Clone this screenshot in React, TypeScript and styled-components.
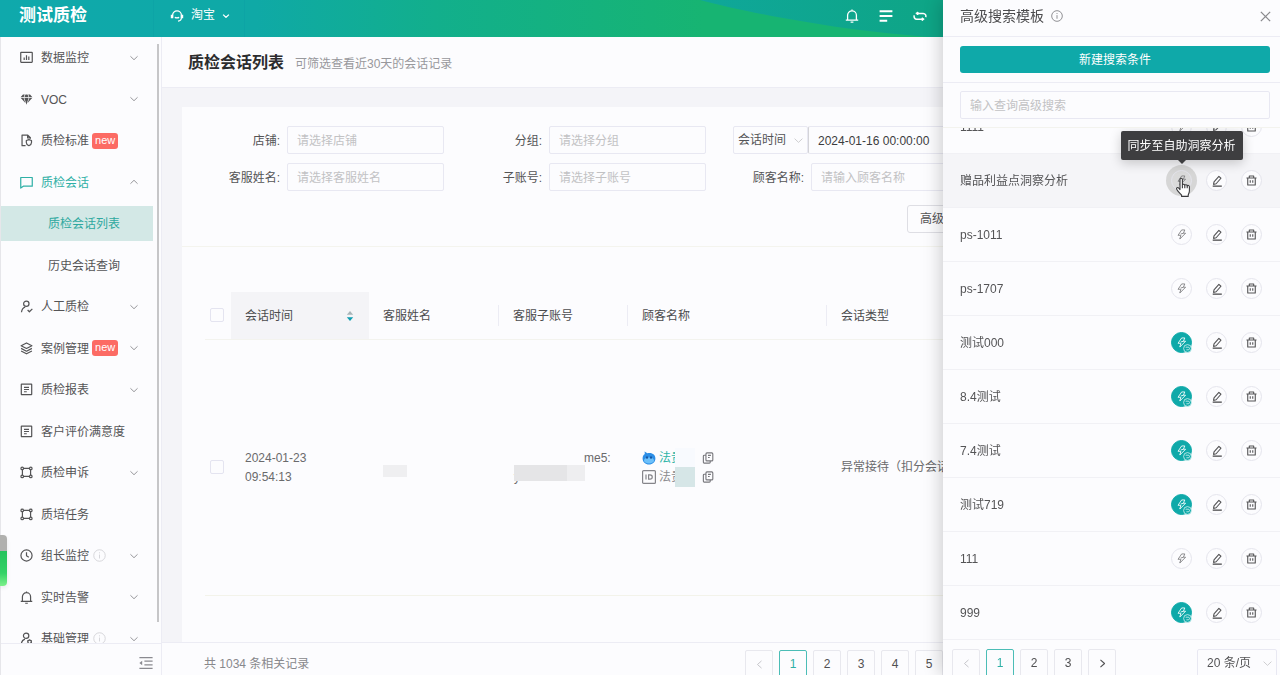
import React from "react";
import styled, { createGlobalStyle, css } from "styled-components";

const c = {
  teal: "#0fa9a9",
  surface: "#fcfcfe",
  canvas: "#f4f4f8",
  line: "#ececf4",
  text: "#545456",
  dark: "#2c2c2e",
  muted: "#98989c",
  faint: "#c2c2c4",
};

const GlobalStyle = createGlobalStyle`
  * { box-sizing: border-box; }
  html, body, #root { height: 100%; margin: 0; }
  body {
    font-family: "Liberation Sans", "Noto Sans CJK SC", sans-serif;
    font-size: 12px;
    line-height: 19px;
    color: ${c.text};
    background: ${c.surface};
    overflow: hidden;
  }
  button, input, select { font: inherit; color: inherit; margin: 0; }
  button { cursor: pointer; }
  ul, ol { list-style: none; margin: 0; padding: 0; }
  h1, h2, p { margin: 0; }
  svg { display: block; flex: none; }
`;

/* ---------- icons ---------- */

const paths: Record<string, React.ReactNode> = {
  chart: (
    <>
      <rect x="0.8" y="1.4" width="12.4" height="10.8" rx="0.5" />
      <path d="M4.5 9.8V7M7 9.8V4.500M9.500 9.800V6" />
    </>
  ),
  gem: (
    <path
      stroke="none"
      fill="currentColor"
      d="M3.2 1.500h1.900L3.900 4.600H.6zM5.900 1.500h2.200l1.200 3.100H4.700zM8.900 1.500h1.900l2.600 3.100h-3.300zM.9 5.300h3l1.900 5.600zM4.700 5.300h4.600L7 12.600zM10.100 5.300h3l-4.900 5.600z"
    />
  ),
  doc: (
    <>
      <path d="M6 12.6H2.2V1.2h6.2l2.8 2.8v1M8.2 1.4v2.8h2.8" />
      <path d="M6.8 7l2.8-1 2.8 1v2.200c0 1.800-1.200 2.800-2.800 3.400-1.600-.6-2.800-1.600-2.800-3.400z" />
    </>
  ),
  chat: <path d="M.8 1.600h12.400v9.400H3.600L.8 13z" />,
  userCheck: (
    <>
      <circle cx="6.8" cy="4" r="2.9" />
      <path d="M1.6 13.2c.3-3 2-5 4-5.600M8.200 10.800l1.900 1.900 3.200-3.200" />
    </>
  ),
  layers: (
    <path d="M7 1l5.800 3L7 7 1.200 4zM1.200 6.900L7 9.900l5.800-3M1.200 9.700l5.800 3 5.800-3" />
  ),
  report: (
    <>
      <rect x="1.4" y="1.2" width="11.2" height="11.4" rx="0.4" />
      <path d="M4.300 4.600h5.400M4.300 7h5.400M4.300 9.400h3" />
    </>
  ),
  nodes: (
    <>
      <path d="M4 2.600h6M4 11.200h6M2.600 4v6M11.400 4v6" />
      <circle cx="2.4" cy="2.6" r="1.4" />
      <circle cx="11.6" cy="2.6" r="1.4" />
      <circle cx="2.4" cy="11.2" r="1.4" />
      <circle cx="11.6" cy="11.2" r="1.4" />
    </>
  ),
  clock: (
    <>
      <circle cx="7" cy="7" r="6" />
      <path d="M7 3.400v3.800l2.500 1.600" />
    </>
  ),
  bell: (
    <path d="M.8 11.200h12.400M2.600 11V6.200a4.400 4.400 0 018.800 0V11M5.600 13.200h2.800M7 2V.6" />
  ),
  userGear: (
    <>
      <circle cx="6.6" cy="4" r="2.9" />
      <path d="M1.400 13.200c.2-3 1.900-5 4-5.600" />
      <circle cx="10.3" cy="10.6" r="1.9" />
      <path d="M10.300 8v1M10.300 12.200v1M8 9.300l.9.5M11.700 11.400l.9.5M12.600 9.300l-.9.5" />
    </>
  ),
  info: (
    <>
      <circle cx="7" cy="7" r="6.2" />
      <path d="M7 6v4.200M7 3.600v1.100" />
    </>
  ),
  down: <path d="M2 4.600L7 9.400l5-4.800" />,
  up: <path d="M2 9.400L7 4.600l5 4.800" />,
  left: <path d="M9.600 2.400L4.400 7l5.200 4.600" />,
  right: <path d="M4.400 2.400L9.600 7l-5.200 4.600" />,
  close: <path d="M2 2l10 10M12 2L2 12" />,
  headset: (
    <>
      <path d="M2.600 8.600V6.200a4.400 4.400 0 018.800 0v2.600c0 2-1.400 3.200-3.400 3.400" />
      <path d="M2 5.800v3.400M12 5.800v3.400" strokeWidth="2.400" />
      <path d="M4.800 8.400c1.400.6 3 .6 4.400 0" />
    </>
  ),
  lines: (
    <path d="M.6 2.200h12.800M.6 7h12.800M.6 11.800h7.600" strokeWidth="2" />
  ),
  loop: (
    <>
      <path d="M4 4.400h6.200a2.600 2.600 0 012.400 3.800M10 10.200H3.800a2.600 2.600 0 01-2.400-3.800" />
      <path d="M5 3L2.800 4.400 5 5.800zM9 8.800l2.200 1.400L9 11.600z" fill="currentColor" strokeWidth="1" />
    </>
  ),
  fold: (
    <>
      <path d="M.4 1.600h13.200M5.400 5.200h8.200M5.400 8.800h8.200M.4 12.400h13.200" />
      <path d="M3.200 4.800L.4 7l2.800 2.200z" fill="currentColor" stroke="none" />
    </>
  ),
  bolt: <path d="M7.200 1.200h4L9.400 5.400h2.800L4.800 12.800l1.400-4.800H2.600zM9.400 5.400L6 6.400" />,
  pen: (
    <>
      <path d="M9.200 1.600l2.400 2.200-5.600 6.400-3 .8.5-3z" />
      <path d="M2 13h10.600" strokeWidth="1.600" />
    </>
  ),
  trash: (
    <>
      <path d="M.6 3.800h12.800M4.200 3.600V1.200h5.600v2.400M2.200 4v8.800h9.600V4" />
      <path d="M5.400 6.800v3M8.600 6.800v3" />
    </>
  ),
  copy: (
    <>
      <rect x="4.600" y="1" width="8" height="9.400" rx="1.200" />
      <path d="M4.600 3.800H2.600a1 1 0 00-1 1V12a1 1 0 001 1h6a1 1 0 001-1v-1.400M7 4h3.400M7 6.400h2" />
    </>
  ),
};

function Icon({ name, size = 14, weight = 1.2 }: { name: string; size?: number; weight?: number }) {
  return (
    <svg width={size} height={size} viewBox="0 0 14 14" fill="none" stroke="currentColor" strokeWidth={weight} strokeLinejoin="round" aria-hidden="true">
      {paths[name]}
    </svg>
  );
}

/* ---------- shell ---------- */

const Page = styled.div`
  height: 100vh;
  display: flex;
  flex-direction: column;
  overflow: hidden;
`;

const TopBar = styled.header`
  position: relative;
  flex: none;
  height: 37px;
  padding: 0 353px 6px 19px;
  display: flex;
  align-items: center;
  color: #fff;
  background: linear-gradient(90deg, #0fa9ac 0, #0fa9a6 20%, #12af8c 34%, #17b472 55%, #17b472 100%);
`;

const Wave = styled.svg`
  position: absolute;
  inset: 0;
  width: 100%;
  height: 100%;
`;

const Brand = styled.h1`
  width: 151px;
  font-size: 17px;
  line-height: 28px;
  font-weight: 700;
`;

const ShopSwitch = styled.button`
  position: relative;
  display: flex;
  align-items: center;
  gap: 7px;
  padding: 0;
  border: 0;
  background: none;
`;

const TopActions = styled.div`
  position: relative;
  display: flex;
  gap: 20px;
  margin-left: auto;
`;

const PlainButton = styled.button`
  display: flex;
  padding: 0;
  border: 0;
  background: none;
`;

const Body = styled.div`
  flex: 1;
  min-height: 0;
  display: flex;
`;

/* ---------- side menu ---------- */

const Sidebar = styled.nav`
  position: relative;
  flex: none;
  width: 162px;
  display: flex;
  flex-direction: column;
  border-left: 1px solid #e6e6ea;
  border-right: 1px solid ${c.line};
`;

const MenuScroll = styled.ul`
  flex: 1;
  min-height: 0;
  overflow: hidden;
`;

const MenuItem = styled.li`
  height: 41px;
  display: flex;
  align-items: center;
  &:nth-child(even) { height: 42px; }
`;

const MenuLink = styled.a<{ $active?: boolean }>`
  flex: 1;
  display: flex;
  align-items: center;
  padding: 0 22px 0 19px;
  color: ${(p) => (p.$active ? "#2fb0a6" : c.text)};
  text-decoration: none;
`;

const MenuText = styled.span`
  margin-left: 8px;
  padding-top: 2px;
`;

const MenuChevron = styled.span`
  margin-left: auto;
  color: #98989c;
`;

const SubLink = styled.a<{ $active?: boolean }>`
  flex: 1;
  height: 35px;
  margin-right: 8px;
  padding-left: 47px;
  line-height: 37px;
  text-decoration: none;
  color: ${(p) => (p.$active ? "#2fa8a0" : c.text)};
  background: ${(p) => (p.$active ? "#d3e8e6" : "none")};
`;

const NewTag = styled.span`
  margin-left: 3px;
  padding: 0 3px;
  height: 16px;
  line-height: 15px;
  border-radius: 3px;
  font-size: 11px;
  background: #fc6b64;
  color: #fff;
`;

const InfoMark = styled.span`
  margin-left: 4px;
  color: #d4d4d8;
`;

const ScrollThumb = styled.div`
  position: absolute;
  top: 7px;
  bottom: 53px;
  right: 2px;
  width: 2px;
  background: #c6c6c8;
`;

const SideFooter = styled.div`
  flex: none;
  height: 32px;
  padding: 7px 8px 0 0;
  display: flex;
  justify-content: flex-end;
  align-items: center;
  border-top: 1px solid ${c.line};
  color: #8a8a90;
`;

const EdgeHandle = styled.div`
  position: fixed;
  left: 0;
  bottom: 89px;
  width: 7px;
  height: 51px;
  border-radius: 0 4px 4px 0;
  background: linear-gradient(#b0b0ae 0 16px, #24c25c 16px, #34d266 38px, #7cf08a);
  box-shadow: 0 2px 4px rgba(0, 0, 0, 0.08);
`;

/* ---------- main column ---------- */

const Main = styled.main`
  flex: 1;
  min-width: 0;
  display: flex;
  flex-direction: column;
  background: ${c.canvas};
`;

const PageHead = styled.div`
  flex: none;
  height: 51px;
  padding: 2px 0 0 26px;
  display: flex;
  align-items: center;
  gap: 11px;
  background: ${c.surface};
  border-bottom: 1px solid ${c.line};
`;

const PageTitle = styled.h2`
  font-size: 16px;
  line-height: 24px;
  color: ${c.dark};
`;

const Hint = styled.p`
  padding-top: 2px;
  color: ${c.muted};
`;

const Card = styled.section`
  flex: 1;
  min-height: 0;
  margin: 19px 20px 0;
  overflow: hidden;
  background: ${c.surface};
`;

const Filters = styled.form`
  display: grid;
  grid-template-columns: repeat(4, minmax(0, 1fr));
  row-gap: 9px;
  padding: 19px 30px 13px 0;
`;

const Field = styled.div`
  display: flex;
  align-items: center;
`;

const FieldLabel = styled.label`
  width: 105px;
  padding: 2px 7px 0 0;
  text-align: right;
`;

const box = css`
  height: 28px;
  border: 1px solid #e8e8f2;
  border-radius: 2px;
  background: ${c.surface};
`;

const TextInput = styled.input`
  ${box}
  flex: 1;
  min-width: 0;
  padding: 2px 9px 0;
  outline: 0;
  &::placeholder { color: ${c.faint}; opacity: 1; }
`;

const DateInput = styled(TextInput)`
  color: #3c3c3e;
  border-left-color: #d4d4d8;
`;

const TimeGroup = styled(Field)`
  grid-column: 3 / 5;
  padding-left: 27px;
`;

const SelectWrap = styled.span<{ $width: number }>`
  position: relative;
  width: ${(p) => p.$width}px;
  color: ${c.faint};
`;

const Select = styled.select`
  ${box}
  display: block;
  width: 100%;
  padding: 1px 4px 0;
  appearance: none;
  color: ${c.text};
  outline: 0;
`;

const PageSizeSelect = styled(Select)`
  padding: 0 9px;
`;

const SelectArrow = styled.span`
  position: absolute;
  right: 4px;
  top: 9px;
  pointer-events: none;
`;

const FormActions = styled.div`
  grid-column: 1 / -1;
  display: flex;
  justify-content: flex-end;
  padding: 5px 249px 0 0;
`;

const OutlineButton = styled.button`
  ${box}
  padding: 1px 12px 0;
  border-color: #dedee4;
  border-radius: 3px;
`;

const TableWrap = styled.div`
  padding: 45px 23px 0;
  border-top: 1px solid #f4f4ee;
`;

const Table = styled.table`
  width: 100%;
  table-layout: fixed;
  border-collapse: collapse;
`;

const Th = styled.th<{ $sorted?: boolean }>`
  height: 47px;
  padding: 0;
  text-align: left;
  font-weight: 400;
  color: #4c4c4e;
  border-bottom: 1px solid #f3f3ee;
  background: ${(p) => (p.$sorted ? "#f4f4f7" : "none")};
`;

const ThInner = styled.div<{ $divider?: boolean }>`
  display: flex;
  justify-content: space-between;
  align-items: center;
  padding: 2px 14px 0;
  border-right: 1px solid ${(p) => (p.$divider ? c.line : "transparent")};
`;

const Td = styled.td`
  position: relative;
  height: 256px;
  padding: 1px 14px 0;
  color: #6a6a6c;
  border-bottom: 1px solid #f3f3ea;
`;

const CheckTd = styled(Td)`
  padding: 0 5px;
`;

const Check = styled.input`
  display: block;
  appearance: none;
  width: 14px;
  height: 14px;
  border: 1px solid #e4e4f0;
  border-radius: 2px;
`;

const CheckHead = styled.div`
  padding-left: 5px;
`;

const NoWrap = styled.div`
  white-space: nowrap;
  overflow: hidden;
`;

const Mask = styled.span<{ $w: number; $h: number; $tone: string }>`
  display: block;
  width: ${(p) => p.$w}px;
  height: ${(p) => p.$h}px;
  background: ${(p) => p.$tone};
`;

const NameMask = styled.div`
  padding-top: 6px;
`;

const Account = styled.div`
  position: relative;
`;

const AccountLine = styled.div<{ $indent?: boolean }>`
  padding-left: ${(p) => (p.$indent ? 71 : 1)}px;
`;

const AccountMask = styled.div`
  position: absolute;
  top: 16px;
  left: 1px;
  display: flex;
`;

const CustomerLine = styled.div<{ $link?: boolean }>`
  position: relative;
  display: flex;
  align-items: center;
  gap: 3px;
  height: 19px;
  color: ${(p) => (p.$link ? "#2fb5a8" : "#8c8c90")};
`;

const CustomerName = styled.span`
  position: relative;
  width: 40px;
`;

const NameCover = styled.span<{ $tone: string }>`
  position: absolute;
  left: 16px;
  top: -1px;
  width: 20px;
  height: 20px;
  background: ${(p) => p.$tone};
`;

const CopyButton = styled(PlainButton)`
  color: #77777c;
`;

const MainFooter = styled.footer`
  flex: none;
  height: 33px;
  padding: 7px 337px 0 42px;
  display: flex;
  align-items: flex-start;
  justify-content: space-between;
  overflow: hidden;
  background: ${c.surface};
  border-top: 1px solid ${c.line};
`;

const Total = styled.p`
  padding-top: 5px;
  color: #88888c;
`;

const Pager = styled.div`
  display: flex;
  gap: 6px;
`;

const PageButton = styled.button<{ $current?: boolean; $dim?: boolean }>`
  width: 28px;
  height: 28px;
  padding: 0;
  display: flex;
  align-items: center;
  justify-content: center;
  border: 1px solid ${(p) => (p.$current ? "#4bbdb6" : "#e8e8ee")};
  border-radius: 2px;
  background: ${c.surface};
  color: ${(p) => (p.$current ? "#2fb0a6" : p.$dim ? "#c2c2c8" : "#505052")};
`;

/* ---------- drawer ---------- */

const Drawer = styled.aside`
  position: fixed;
  top: 0;
  right: 0;
  bottom: 0;
  width: 337px;
  display: flex;
  flex-direction: column;
  background: ${c.surface};
  box-shadow: -3px 0 16px rgba(0, 0, 0, 0.18);
`;

const DrawerHead = styled.div`
  flex: none;
  height: 37px;
  padding: 0 8px 4px 17px;
  display: flex;
  align-items: center;
  border-bottom: 1px solid ${c.line};
  color: #8a8a8e;
`;

const DrawerTitle = styled.h2`
  margin-right: 7px;
  font-size: 14px;
  font-weight: 400;
  color: #4c4c4e;
`;

const CloseButton = styled(PlainButton)`
  margin-left: auto;
`;

const DrawerBlock = styled.div`
  flex: none;
  display: flex;
  padding: 8px 10px 8px 17px;
`;

const CreateBlock = styled(DrawerBlock)`
  padding-top: 9px;
  padding-bottom: 9px;
  border-bottom: 1px solid ${c.line};
`;

const PrimaryButton = styled.button`
  flex: 1;
  height: 27px;
  padding: 2px 0 0;
  border: 0;
  border-radius: 3px;
  background: ${c.teal};
  color: #fff;
`;

const TemplateViewport = styled.div`
  flex: 1;
  min-height: 0;
  display: flex;
  flex-direction: column;
  overflow: hidden;
  border-top: 1px solid #f3f3ee;
`;

const TemplateList = styled.ul`
  margin-top: -28px;
`;

const TemplateRow = styled.li<{ $hover?: boolean }>`
  height: 54px;
  padding: 0 18px 0 17px;
  display: flex;
  align-items: center;
  justify-content: space-between;
  border-bottom: 1px solid #f1f1f5;
  background: ${(p) => (p.$hover ? "#f5f5f8" : "none")};
`;

const TemplateName = styled.span`
  padding-top: 1px;
`;

const RowActions = styled.div`
  display: flex;
  gap: 14px;
`;

const RoundButton = styled.button<{ $on?: boolean; $pressed?: boolean; $soft?: boolean }>`
  position: relative;
  width: 21px;
  height: 21px;
  padding: 0;
  display: flex;
  align-items: center;
  justify-content: center;
  border: 1px solid ${(p) => (p.$on ? c.teal : "#e4e4ec")};
  border-radius: 50%;
  color: ${(p) => (p.$on ? "#fff" : p.$soft ? "#7c7c7e" : "#545456")};
  background: ${(p) => (p.$on ? c.teal : p.$pressed ? "#dadada" : c.surface)};
  box-shadow: ${(p) => (p.$pressed ? "0 0 0 5px #d6d6d6" : "none")};
`;

const SyncBadge = styled.svg`
  position: absolute;
  right: -1px;
  bottom: -1px;
`;

const Tooltip = styled.span`
  position: absolute;
  z-index: 2;
  left: 50%;
  bottom: 30px;
  transform: translateX(-50%);
  padding: 0 7px;
  height: 29px;
  line-height: 30px;
  white-space: nowrap;
  border-radius: 2px;
  background: #3e3e40;
  color: #fff;
  box-shadow: 0 3px 12px rgba(0, 0, 0, 0.2);
  &::after {
    content: "";
    position: absolute;
    left: 50%;
    top: 100%;
    margin-left: -4px;
    border: 4px solid transparent;
    border-top-color: #3e3e40;
  }
`;

const HandCursor = styled.svg`
  position: absolute;
  left: 3px;
  top: 6px;
`;

const DrawerFooter = styled.div`
  flex: none;
  height: 34px;
  padding: 8px 3px 0 9px;
  display: flex;
  align-items: flex-start;
  justify-content: space-between;
  overflow: hidden;
`;

/* ---------- data ---------- */

type Entry = { label: string; icon?: string; tag?: boolean; info?: boolean; arrow?: "down" | "up"; active?: boolean; sub?: boolean };

const menu: Entry[] = [
  { label: "数据监控", icon: "chart", arrow: "down" },
  { label: "VOC", icon: "gem", arrow: "down" },
  { label: "质检标准", icon: "doc", tag: true },
  { label: "质检会话", icon: "chat", arrow: "up", active: true },
  { label: "质检会话列表", sub: true, active: true },
  { label: "历史会话查询", sub: true },
  { label: "人工质检", icon: "userCheck", arrow: "down" },
  { label: "案例管理", icon: "layers", tag: true, arrow: "down" },
  { label: "质检报表", icon: "report", arrow: "down" },
  { label: "客户评价满意度", icon: "report" },
  { label: "质检申诉", icon: "nodes", arrow: "down" },
  { label: "质培任务", icon: "nodes" },
  { label: "组长监控", icon: "clock", info: true, arrow: "down" },
  { label: "实时告警", icon: "bell", arrow: "down" },
  { label: "基础管理", icon: "userGear", info: true, arrow: "down" },
];

const templates = [
  { name: "1111", on: false },
  { name: "赠品利益点洞察分析", on: false, hover: true },
  { name: "ps-1011", on: false },
  { name: "ps-1707", on: false },
  { name: "测试000", on: true },
  { name: "8.4测试", on: true },
  { name: "7.4测试", on: true },
  { name: "测试719", on: true },
  { name: "111", on: false },
  { name: "999", on: true },
];

/* ---------- parts ---------- */

function FilterInput({ id, label, placeholder }: { id: string; label: string; placeholder: string }) {
  return (
    <Field>
      <FieldLabel htmlFor={id}>{label}:</FieldLabel>
      <TextInput id={id} placeholder={placeholder} />
    </Field>
  );
}

function Pagination({ pages, next }: { pages: number; next?: boolean }) {
  return (
    <Pager>
      <PageButton $dim aria-label="上一页"><Icon name="left" size={11} /></PageButton>
      {Array.from({ length: pages }, (_, i) => (
        <PageButton key={i} $current={i === 0}>{i + 1}</PageButton>
      ))}
      {next && <PageButton aria-label="下一页"><Icon name="right" size={11} weight={1.4} /></PageButton>}
    </Pager>
  );
}

function Template({ name, on, hover }: { name: string; on: boolean; hover?: boolean }) {
  return (
    <TemplateRow $hover={hover}>
      <TemplateName>{name}</TemplateName>
      <RowActions>
        <RoundButton $on={on} $pressed={hover} $soft aria-label="同步">
          <Icon name="bolt" size={11} weight={1.1} />
          {on && (
            <SyncBadge width="9" height="9" viewBox="0 0 9 9" fill={c.teal} stroke="#d8f4f2" strokeWidth="0.8">
              <circle cx="4.5" cy="4.5" r="3.9" />
              <path d="M2.6 3.2h2.6a1.2 1.2 0 010 2.6H3.4" />
            </SyncBadge>
          )}
          {hover && (
            <>
              <Tooltip role="tooltip">同步至自助洞察分析</Tooltip>
              <HandCursor width="18" height="21" viewBox="0 0 18 21" fill="#fff" stroke="#3a3a3c" strokeWidth="1.1" strokeLinejoin="round">
                <path d="M5 12.6V2.6c0-1.8 2.4-1.8 2.4 0v5.6c.3-1.3 2.3-1.1 2.4.2.4-1 2.2-.8 2.4.5.5-.9 2.2-.5 2.2.8v4.1c0 2-.9 2.8-1.2 4.4v1.2H6.6v-1.2C5.4 16.8 3 14.6 1.8 12.4c-.9-1.6.9-2.6 2-1.2z" />
                <path d="M7.4 8.2v3M9.8 8.4v2.8M12.2 9v2.2" fill="none" />
              </HandCursor>
            </>
          )}
        </RoundButton>
        <RoundButton aria-label="编辑"><Icon name="pen" size={12} weight={1.3} /></RoundButton>
        <RoundButton aria-label="删除"><Icon name="trash" size={11} weight={1.4} /></RoundButton>
      </RowActions>
    </TemplateRow>
  );
}

export default function App() {
  return (
    <Page>
      <GlobalStyle />
      <TopBar>
        <Wave viewBox="0 0 1280 37" preserveAspectRatio="none" aria-hidden="true">
          <defs>
            <linearGradient id="wave" x1="0" x2="1">
              <stop offset="0" stopColor="#0fa79a" />
              <stop offset="0.4" stopColor="#0ea586" />
              <stop offset="1" stopColor="#0ea586" />
            </linearGradient>
          </defs>
          <path d="M700 0C752 14 850 32 930 37H1280V0z" fill="url(#wave)" />
          <path d="M244.5 0V37M153.5 0V37" stroke="#0c9ba4" strokeOpacity="0.35" />
        </Wave>
        <Brand>测试质检</Brand>
        <ShopSwitch>
          <Icon name="headset" />
          <span>淘宝</span>
          <Icon name="down" size={8} weight={2.4} />
        </ShopSwitch>
        <TopActions>
          <PlainButton aria-label="通知"><Icon name="bell" weight={1.3} /></PlainButton>
          <PlainButton aria-label="列表"><Icon name="lines" /></PlainButton>
          <PlainButton aria-label="切换"><Icon name="loop" weight={1.5} /></PlainButton>
        </TopActions>
      </TopBar>

      <Body>
        <Sidebar>
          <MenuScroll>
            {menu.map((m) => (
              <MenuItem key={m.label}>
                {m.sub ? (
                  <SubLink href="#" $active={m.active}>{m.label}</SubLink>
                ) : (
                  <MenuLink href="#" $active={m.active}>
                    <Icon name={m.icon!} size={13} weight={1.3} />
                    <MenuText>{m.label}</MenuText>
                    {m.tag && <NewTag>new</NewTag>}
                    {m.info && <InfoMark><Icon name="info" size={13} weight={1} /></InfoMark>}
                    {m.arrow && <MenuChevron><Icon name={m.arrow} size={10} weight={1.4} /></MenuChevron>}
                  </MenuLink>
                )}
              </MenuItem>
            ))}
          </MenuScroll>
          <ScrollThumb />
          <SideFooter>
            <PlainButton aria-label="收起菜单"><Icon name="fold" weight={1.3} /></PlainButton>
          </SideFooter>
        </Sidebar>

        <Main>
          <PageHead>
            <PageTitle>质检会话列表</PageTitle>
            <Hint>可筛选查看近30天的会话记录</Hint>
          </PageHead>

          <Card>
            <Filters onSubmit={(e) => e.preventDefault()}>
              <FilterInput id="shop" label="店铺" placeholder="请选择店铺" />
              <FilterInput id="group" label="分组" placeholder="请选择分组" />
              <TimeGroup>
                <SelectWrap $width={75}>
                  <Select aria-label="时间类型"><option>会话时间</option></Select>
                  <SelectArrow><Icon name="down" size={11} weight={1} /></SelectArrow>
                </SelectWrap>
                <DateInput aria-label="开始时间" defaultValue="2024-01-16 00:00:00" />
              </TimeGroup>
              <FilterInput id="agent" label="客服姓名" placeholder="请选择客服姓名" />
              <FilterInput id="account" label="子账号" placeholder="请选择子账号" />
              <FilterInput id="customer" label="顾客名称" placeholder="请输入顾客名称" />
              <FormActions>
                <OutlineButton type="button">高级搜索</OutlineButton>
              </FormActions>
            </Filters>

            <TableWrap>
              <Table>
                <colgroup>
                  <col width="26" />
                  <col width="138" />
                  <col width="130" />
                  <col width="129" />
                  <col width="199" />
                  <col />
                </colgroup>
                <thead>
                  <tr>
                    <Th><CheckHead><Check type="checkbox" aria-label="全选" /></CheckHead></Th>
                    <Th $sorted>
                      <ThInner>
                        会话时间
                        <svg width="8" height="12" viewBox="0 0 8 12" aria-hidden="true">
                          <path d="M4 1l3.2 3.8H.8z" fill="#a8b4b8" />
                          <path d="M4 11L.8 7.2h6.4z" fill="#0f9db0" />
                        </svg>
                      </ThInner>
                    </Th>
                    <Th><ThInner $divider>客服姓名</ThInner></Th>
                    <Th><ThInner $divider>客服子账号</ThInner></Th>
                    <Th><ThInner $divider>顾客名称</ThInner></Th>
                    <Th><ThInner>会话类型</ThInner></Th>
                  </tr>
                </thead>
                <tbody>
                  <tr>
                    <CheckTd><Check type="checkbox" aria-label="选择会话" /></CheckTd>
                    <Td>2024-01-23<br />09:54:13</Td>
                    <Td><NameMask><Mask $w={24} $h={12} $tone="#efeff1" /></NameMask></Td>
                    <Td>
                      <Account>
                        <AccountLine $indent>me5:</AccountLine>
                        <AccountLine>yuanxin</AccountLine>
                        <AccountMask>
                          <Mask $w={53} $h={16} $tone="#e5e5e7" />
                          <Mask $w={18} $h={16} $tone="#eeeef0" />
                        </AccountMask>
                      </Account>
                    </Td>
                    <Td>
                      <CustomerLine $link>
                        <svg width="14" height="14" viewBox="0 0 14 14" aria-hidden="true">
                          <path d="M2.6.6l2.8 1.6C10 1 13.4 3.600 13.400 7.400c0 3.600-2.800 6-6.400 6S.6 11 .6 7.400c0-2 .8-3.400 2.200-4.400z" fill="#2c8ee6" />
                          <ellipse cx="7" cy="9.400" rx="5" ry="3" fill="#6cc0fa" />
                          <ellipse cx="5" cy="6.600" rx="0.900" ry="1.300" fill="#14509c" />
                          <ellipse cx="9" cy="6.600" rx="0.900" ry="1.300" fill="#14509c" />
                        </svg>
                        <CustomerName>法贵<NameCover $tone="#f8fafe" /></CustomerName>
                        <CopyButton aria-label="复制名称"><Icon name="copy" size={12} weight={1.3} /></CopyButton>
                      </CustomerLine>
                      <CustomerLine>
                        <svg width="14" height="14" viewBox="0 0 14 14" fill="none" stroke="#85858a" strokeWidth="1.2" aria-hidden="true">
                          <rect x="0.6" y="0.6" width="12.8" height="12.8" rx="1" />
                          <path d="M4 4.400v5.200M6.600 4.800h1.400c3 0 3 4.400 0 4.400H6.600z" />
                        </svg>
                        <CustomerName>法贵<NameCover $tone="#d6e6e7" /></CustomerName>
                        <CopyButton aria-label="复制编号"><Icon name="copy" size={12} weight={1.3} /></CopyButton>
                      </CustomerLine>
                    </Td>
                    <Td><NoWrap>异常接待（扣分会话）</NoWrap></Td>
                  </tr>
                </tbody>
              </Table>
            </TableWrap>
          </Card>

          <MainFooter>
            <Total>共 1034 条相关记录</Total>
            <Pagination pages={5} />
          </MainFooter>
        </Main>
      </Body>

      <EdgeHandle />

      <Drawer>
        <DrawerHead>
          <DrawerTitle>高级搜索模板</DrawerTitle>
          <Icon name="info" size={12} weight={1.1} />
          <CloseButton aria-label="关闭"><Icon name="close" size={13} weight={1.4} /></CloseButton>
        </DrawerHead>
        <CreateBlock><PrimaryButton>新建搜索条件</PrimaryButton></CreateBlock>
        <DrawerBlock><TextInput aria-label="查询高级搜索" placeholder="输入查询高级搜索" /></DrawerBlock>
        <TemplateViewport>
          <TemplateList>
            {templates.map((t) => <Template key={t.name} {...t} />)}
          </TemplateList>
        </TemplateViewport>
        <DrawerFooter>
          <Pagination pages={3} next />
          <SelectWrap $width={80}>
            <PageSizeSelect aria-label="每页条数"><option>20 条/页</option></PageSizeSelect>
            <SelectArrow><Icon name="down" size={11} weight={1} /></SelectArrow>
          </SelectWrap>
        </DrawerFooter>
      </Drawer>
    </Page>
  );
}
